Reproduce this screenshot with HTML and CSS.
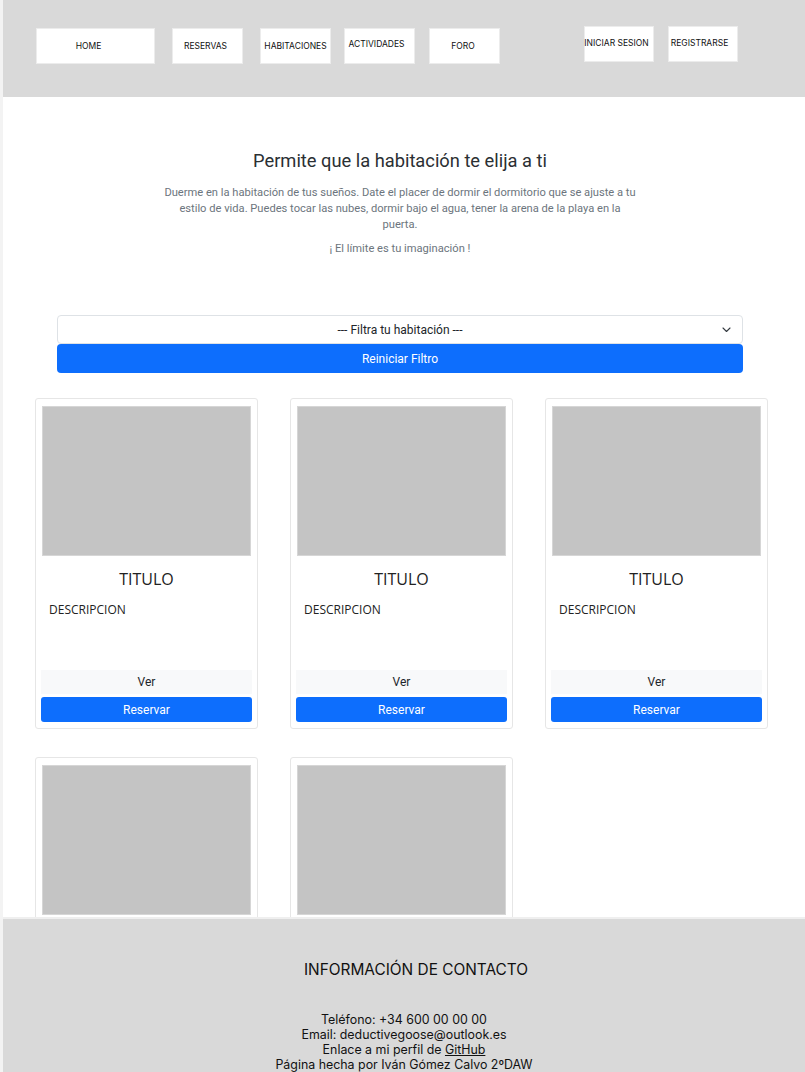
FILE: index.html
```html
<!DOCTYPE html>
<html lang="es">
<head>
<meta charset="utf-8">
<title>Habitaciones</title>
<link rel="stylesheet" href="styles.css">
</head>
<body>
<div class="page">
  <header class="topbar">
    <nav class="nav-main">
      <a class="nav-btn nav-home">HOME</a>
      <a class="nav-btn nav-reservas">RESERVAS</a>
      <a class="nav-btn nav-hab">HABITACIONES</a>
      <a class="nav-btn nav-act">ACTIVIDADES</a>
      <a class="nav-btn nav-foro">FORO</a>
    </nav>
    <nav class="nav-user">
      <a class="nav-btn nav-login">INICIAR SESION</a>
      <a class="nav-btn nav-reg">REGISTRARSE</a>
    </nav>
  </header>

  <section class="hero">
    <h1 class="hero-title">Permite que la habitación te elija a ti</h1>
    <p class="hero-text">Duerme en la habitación de tus sueños. Date el placer de dormir el dormitorio que se ajuste a tu estilo de vida. Puedes tocar las nubes, dormir bajo el agua, tener la arena de la playa en la puerta.</p>
    <p class="hero-text hero-limit">¡ El límite es tu imaginación !</p>
  </section>

  <section class="filters">
    <div class="select-box">
      <span>--- Filtra tu habitación ---</span>
      <svg class="chev" width="9" height="6" viewBox="0 0 9 6"><path d="M1 1 L4.5 4.5 L8 1" fill="none" stroke="#343a40" stroke-width="1.1" stroke-linecap="round" stroke-linejoin="round"/></svg>
    </div>
    <button class="btn-reset">Reiniciar Filtro</button>
  </section>

  <section class="grid">
    <article class="card">
      <div class="card-img"></div>
      <h2 class="card-title">TITULO</h2>
      <p class="card-desc">DESCRIPCION</p>
      <button class="btn-ver">Ver</button>
      <button class="btn-res">Reservar</button>
    </article>
    <article class="card">
      <div class="card-img"></div>
      <h2 class="card-title">TITULO</h2>
      <p class="card-desc">DESCRIPCION</p>
      <button class="btn-ver">Ver</button>
      <button class="btn-res">Reservar</button>
    </article>
    <article class="card">
      <div class="card-img"></div>
      <h2 class="card-title">TITULO</h2>
      <p class="card-desc">DESCRIPCION</p>
      <button class="btn-ver">Ver</button>
      <button class="btn-res">Reservar</button>
    </article>
    <article class="card">
      <div class="card-img"></div>
      <h2 class="card-title">TITULO</h2>
      <p class="card-desc">DESCRIPCION</p>
      <button class="btn-ver">Ver</button>
      <button class="btn-res">Reservar</button>
    </article>
    <article class="card">
      <div class="card-img"></div>
      <h2 class="card-title">TITULO</h2>
      <p class="card-desc">DESCRIPCION</p>
      <button class="btn-ver">Ver</button>
      <button class="btn-res">Reservar</button>
    </article>
  </section>

  <footer class="footer">
    <h3 class="footer-title">INFORMACIÓN DE CONTACTO</h3>
    <div class="footer-lines">
      <p>Teléfono: +34 600 00 00 00</p>
      <p>Email: deductivegoose@outlook.es</p>
      <p>Enlace a mi perfil de <a class="gh">GitHub</a></p>
      <p>Página hecha por Iván Gómez Calvo 2ºDAW</p>
    </div>
  </footer>
</div>
</body>
</html>
```

FILE: styles.css
```css
html, body {
  margin: 0;
  padding: 0;
  background: #ffffff;
}
body {
  font-family: Roboto, "Liberation Sans", Arial, sans-serif;
  color: #212529;
}
.page {
  border-left: 3px solid #f3f3f3;
  box-sizing: border-box;
}

/* header */
.topbar {
  background: #d9d9d9;
  height: 97px;
  display: flex;
  align-items: flex-start;
  font-family: Inter, Roboto, "Liberation Sans", sans-serif;
}
.nav-main {
  display: flex;
  margin-top: 28px;
  margin-left: 33px;
}
.nav-btn {
  display: flex;
  align-items: center;
  justify-content: center;
  background: #ffffff;
  border: 1px solid #ececec;
  box-sizing: border-box;
  height: 36px;
  width: 71px;
  font-size: 8.5px;
  color: #111;
  text-decoration: none;
  white-space: nowrap;
}
.nav-home { width: 119px; padding-right: 14px; }
.nav-reservas { margin-left: 17px; padding-right: 4px; }
.nav-hab { margin-left: 17px; }
.nav-act { margin-left: 13px; align-items: flex-start; padding-top: 10px; padding-right: 6px; }
.nav-foro { margin-left: 14px; padding-right: 3px; }
.nav-user {
  display: flex;
  margin-top: 26px;
  margin-left: 84px;
}
.nav-login { width: 70px; padding-bottom: 2px; padding-right: 5px; }
.nav-reg { width: 70px; margin-left: 14px; padding-bottom: 2px; padding-right: 7px; }

/* hero */
.hero {
  text-align: center;
  padding-top: 53px;
  padding-right: 8px;
}
.hero-title {
  font-size: 18.3px;
  font-weight: 400;
  margin: 0 0 14px;
  color: #2b2f33;
}
.hero-text {
  font-size: 11.15px;
  line-height: 16px;
  color: #6c757d;
  width: 478px;
  margin: 0 auto;
}
.hero-limit {
  margin-top: 8px;
}

/* filters */
.filters {
  margin: 58px 62px 0 54px;
}
.select-box {
  position: relative;
  height: 29px;
  border: 1px solid #dee2e6;
  border-radius: 4px;
  box-sizing: border-box;
  display: flex;
  align-items: center;
  justify-content: center;
  font-size: 12px;
  color: #212529;
}
.chev {
  position: absolute;
  right: 11px;
  top: 11px;
}
.btn-reset {
  display: block;
  width: 100%;
  height: 29px;
  background: #0d6efd;
  color: #fff;
  border: 0;
  border-radius: 4px;
  font-family: Roboto, "Liberation Sans", sans-serif;
  font-size: 12px;
}

/* cards */
.grid {
  display: grid;
  grid-template-columns: repeat(3, 223px);
  column-gap: 32px;
  row-gap: 28px;
  margin: 25px 0 0 32px;
  padding-bottom: 170px;
}
.card {
  border: 1px solid #e6e6e6;
  border-radius: 3px;
  padding: 7px 5px 6px;
  display: flex;
  flex-direction: column;
  box-sizing: border-box;
  height: 331px;
}
.card-img {
  height: 150px;
  margin: 0 1px;
  background: #c4c4c4;
  border: 1px solid #d6d6d6;
  box-sizing: border-box;
}
.card-title {
  font-family: "Open Sans", "Liberation Sans", sans-serif;
  font-size: 16px;
  font-weight: 500;
  text-align: center;
  margin: 12px 0 0;
  line-height: 22px;
  color: #222;
}
.card-desc {
  font-family: "Open Sans", "Liberation Sans", sans-serif;
  font-size: 12px;
  font-weight: 500;
  margin: 12px 0 0 8px;
  line-height: 16px;
  color: #222;
}
.btn-ver {
  margin-top: auto;
  height: 24px;
  background: #f8f9fa;
  border: 0;
  font-family: Roboto, "Liberation Sans", sans-serif;
  font-size: 12px;
  color: #212529;
}
.btn-res {
  margin-top: 3px;
  height: 25px;
  background: #0d6efd;
  color: #fff;
  border: 0;
  border-radius: 3px;
  font-family: Roboto, "Liberation Sans", sans-serif;
  font-size: 12px;
}

/* footer */
.footer {
  position: fixed;
  left: 3px;
  right: 0;
  bottom: 0;
  height: 155px;
  background: #d9d9d9;
  border-top: 2px solid #efefef;
  box-sizing: border-box;
  text-align: center;
  font-family: Inter, Roboto, "Liberation Sans", sans-serif;
  color: #111;
}
.footer-title {
  font-size: 15.4px;
  font-weight: 400;
  margin: 41px 0 0;
  padding-left: 24px;
  line-height: 20px;
}
.footer-lines {
  margin-top: 32px;
  font-size: 12.4px;
  line-height: 15px;
}
.footer-lines p {
  margin: 0;
}
.gh {
  color: #111;
  text-decoration: underline;
}
```
